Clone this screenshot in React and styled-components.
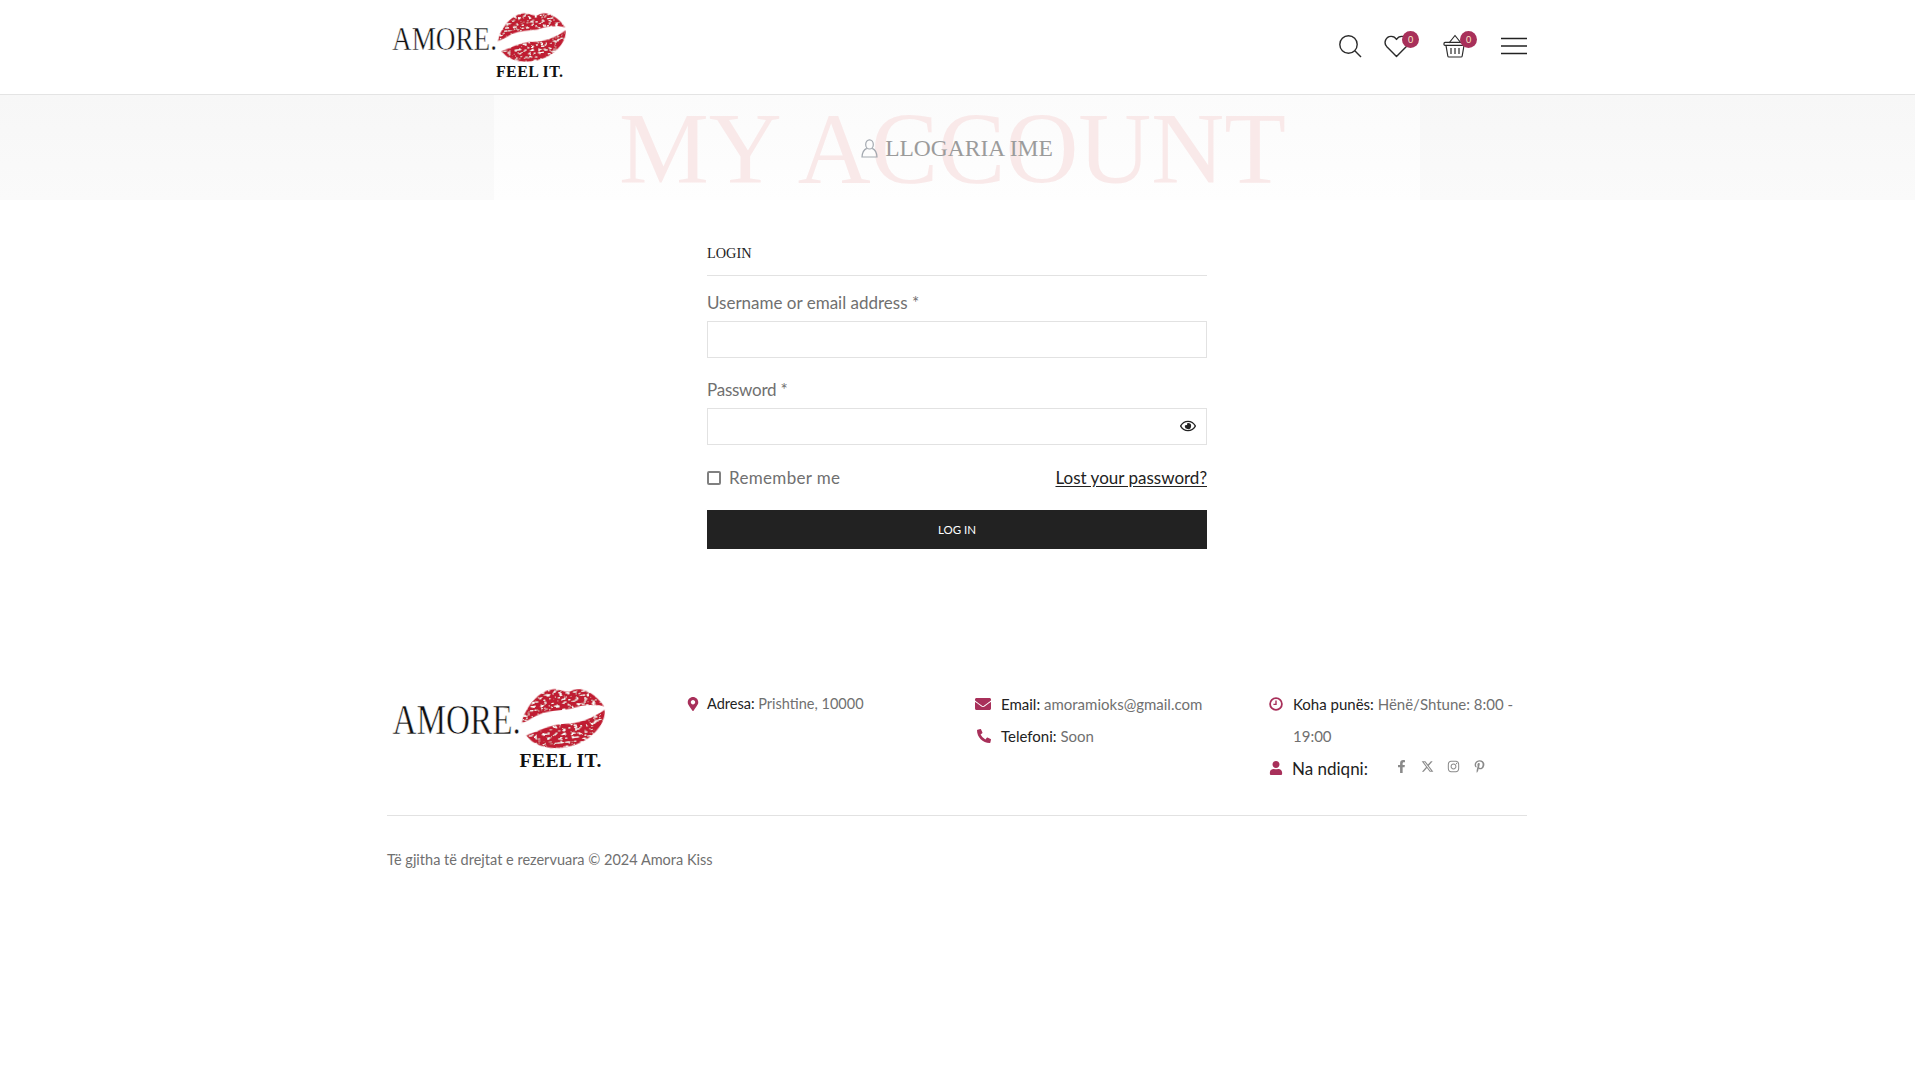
import React from "react";
import styled, { createGlobalStyle } from "styled-components";
import { FaMapMarkerAlt, FaEnvelope, FaPhoneAlt, FaUser, FaFacebookF, FaInstagram, FaPinterestP, FaRegEye } from "react-icons/fa";
import { FaXTwitter } from "react-icons/fa6";

const Global = createGlobalStyle`
  html, body { margin: 0; padding: 0; background: #fff; }
  body { font-family: Lato, "Open Sans", sans-serif; color: #666; min-height: 1085px; padding-right: 1px; }
  * { box-sizing: border-box; }
`;
const Page = styled.div`display: flex; flex-direction: column; min-height: 1085px;`;
const Header = styled.header`height: 95px; margin-right: -1px; padding-right: 1px; border-bottom: 1px solid #e4e4e4; display: flex; justify-content: center;`;
const Bar = styled.div`width: 1140px; display: flex; justify-content: space-between; align-items: flex-start; padding: 10px 0 0 3px;`;
const Icons = styled.div`display: flex; align-items: center; margin-top: 21px;`;
const IconButton = styled.div`position: relative; width: ${p => p.$w}px; height: 30px; margin-left: ${p => p.$ml}px; display: flex; align-items: center; justify-content: center; color: #2b2b2b;`;
const Badge = styled.span`position: absolute; top: 0; right: ${p => p.$r}px; width: 17px; height: 17px; border-radius: 50%; background: #a8305a; color: #fbe9c8; font-size: 9px; display: flex; align-items: center; justify-content: center;`;
const Hero = styled.section`height: 105px; margin-right: -1px; padding-right: 1px; background: linear-gradient(180deg, #f7f7f7, #fafafa); display: flex; justify-content: center;`;
const HeroInner = styled.div`width: 926px; height: 100%; display: grid; place-items: center; background: linear-gradient(180deg, #fbfbfb, #fefefe);`;
const HeroBig = styled.div`grid-area: 1 / 1; font-family: "Liberation Serif", serif; font-size: 101px; line-height: 97px; margin: 4px 9px 0 0; color: #f9e9e9; white-space: nowrap;`;
const HeroTitle = styled.h1`grid-area: 1 / 1; margin: 1px 0 0; display: flex; align-items: center; gap: 7px; font-family: "Liberation Serif", serif; font-weight: 400; font-size: 23.5px; color: #9b9b9b; white-space: nowrap;`;
const Main = styled.main`display: flex; justify-content: center; padding-top: 42px;`;
const Form = styled.div`width: 500px; display: flex; flex-direction: column;`;
const FormTitle = styled.h2`margin: 0; height: 34px; border-bottom: 1px solid #e2e2e2; font-family: "Liberation Serif", serif; font-weight: 400; font-size: 14.3px; line-height: 22px; color: #222;`;
const Label = styled.label`display: block; font-size: 17px; line-height: 20px; color: #707070; margin-top: ${p => p.$mt}px; letter-spacing: ${p => p.$ls}px;`;
const Field = styled.div`height: 37px; margin-top: 8px; border: 1px solid #e2e2e2; display: flex; align-items: center; justify-content: flex-end; padding: 0 10px 2px 0; color: #222; font-size: 16px;`;
const Row = styled.div`display: flex; justify-content: space-between; align-items: center; height: 22px; margin-top: 21px; font-size: 17px;`;
const Remember = styled.span`display: flex; align-items: center; gap: 8px; color: #707070; letter-spacing: 0.33px;`;
const Check = styled.span`width: 14px; height: 14px; margin-top: 2px; border: 2px solid #808080; border-radius: 2px; background: #fff;`;
const Lost = styled.a`color: #222; text-decoration: underline; text-underline-offset: 2px;`;
const Button = styled.button`height: 39px; margin-top: 22px; border: 0; background: #222; color: #fff; font-family: Lato, sans-serif; font-size: 11.5px;`;
const Footer = styled.footer`width: 1140px; margin: 135px auto 0; `;
const Columns = styled.div`display: grid; grid-template-columns: 299px 289px 293px 259px; height: 133px; border-bottom: 1px solid #e2e2e2; margin-top: -1px;`;
const Col = styled.div`display: flex; flex-direction: column; padding-top: 5px;`;
const LogoCol = styled.div`padding: 2px 0 0 3px;`;
const Item = styled.div`display: flex; font-size: ${p => p.$fs || 15}px; line-height: 32px; color: #707070;`;
const ItemIcon = styled.span`flex: 0 0 ${p => p.$w}px; height: 32px; display: flex; align-items: center; color: #a8305a; font-size: ${p => p.$s || 14}px; padding-left: ${p => p.$pl || 0}px;`;
const Strong = styled.span`color: #222;`;
const Follow = styled.div`display: flex; align-items: center; height: 32px; color: #222; font-size: 17px;`;
const Social = styled.div`display: flex; align-items: center; gap: 13px; margin-left: 27px; color: #8a8a8a; font-size: 13px; margin-top: -4px;`;
const Copy = styled.div`font-size: 14.5px; line-height: 20px; color: #707070; margin-top: 34px;`;

const Lips = () => (
  <g transform="rotate(-6 141 26)">
    <path d="M107 28 C113 12 127 1 138 3 C143 4 146 7 150 6 C159 2 169 9 176 21 C167 18 158 18 150 20 C141 21 128 19 120 23 C115 25 111 27 107 28Z" fill="#c01f33" filter="url(#mottle)" />
    <path d="M110 38 C122 35 132 31 142 32 C152 33 164 31 176 24 C176 37 160 50 142 51 C127 52 115 47 110 38Z" fill="#c01f33" filter="url(#mottle)" />
  </g>
);
const Logo = ({ w }) => (
  <svg width={w} height={w * 0.4} viewBox="0 0 180 72">
    <defs>
      <filter id="mottle" x="0" y="0" width="100%" height="100%">
        <feTurbulence type="fractalNoise" baseFrequency="0.3 0.6" numOctaves="2" seed="7" result="n" />
        <feColorMatrix in="n" type="matrix" values="0 0 0 0 1  0 0 0 0 1  0 0 0 0 1  0 0 0 -9 3.7" result="w" />
        <feComposite in="w" in2="SourceGraphic" operator="in" result="spots" />
        <feMerge><feMergeNode in="SourceGraphic" /><feMergeNode in="spots" /></feMerge>
      </filter>
    </defs>
    <text x="2" y="40" fontFamily="Liberation Serif, serif" fontSize="34" fill="#111" stroke="#fff" strokeWidth="0.45" textLength="105" lengthAdjust="spacingAndGlyphs">AMORE.</text>
    <Lips />
    <text x="106" y="67" fontFamily="Liberation Serif, serif" fontWeight="700" fontSize="16" fill="#111" textLength="67" lengthAdjust="spacing">FEEL IT.</text>
  </svg>
);

const Search = () => (
  <svg width="24" height="24" viewBox="0 0 24 24" fill="none" stroke="#2b2b2b" strokeWidth="1.4"><circle cx="10.5" cy="10.5" r="8.7" /><path d="M16.8 16.8 L23 23" /></svg>
);
const Heart = () => (
  <svg width="26" height="24" viewBox="0 0 26 24" fill="none" stroke="#2b2b2b" strokeWidth="1.4" strokeLinejoin="round"><path d="M12.5 22.5 L2.6 12.4 C-0.6 8.8 1.6 2.6 7 2.4 C9.6 2.3 11.4 3.6 12.5 5.4 C13.6 3.6 15.4 2.3 18 2.4 C23.4 2.6 25.4 8.8 22.4 12.4 Z" /></svg>
);
const Basket = () => (
  <svg width="24" height="24" viewBox="0 0 24 24" fill="none" stroke="#2b2b2b" strokeWidth="1.2" strokeLinejoin="round"><path d="M6 9 L12 1.5 L18 9" /><rect x="1" y="8.4" width="22" height="3" rx="1" /><path d="M3 11.5 L4.8 22 C4.9 22.6 5.3 23 6 23 H18 C18.7 23 19.1 22.6 19.2 22 L21 11.5" /><path d="M8 14 V20 M12 14 V20 M16 14 V20" /></svg>
);
const Burger = () => (
  <svg width="26" height="18" viewBox="0 0 26 18" fill="none" stroke="#222" strokeWidth="1.6"><path d="M0 1.5 H26 M0 9 H26 M0 16.5 H26" /></svg>
);
const UserOutline = () => (
  <svg width="17" height="19" viewBox="0 0 17 19" fill="none" stroke="#a3a9b0" strokeWidth="1.2"><ellipse cx="8.5" cy="5.4" rx="3.8" ry="4.6" /><path d="M5.8 9.4 C2.6 10.8 1.2 14 1 18 H16 C15.8 14 14.4 10.8 11.2 9.4" /></svg>
);
const ClockBold = () => (
  <svg width="14" height="14" viewBox="0 0 14 14" fill="none" stroke="#a8305a" strokeWidth="1.8"><circle cx="7" cy="7" r="5.9" /><path d="M7 3.5 V7.4 H4.4" strokeWidth="1.4" /></svg>
);

export default function App() {
  return (
    <Page>
      <Global />
      <Header>
        <Bar>
          <Logo w={180} />
          <Icons>
            <IconButton $w={24} $ml={0}><Search /></IconButton>
            <IconButton $w={26} $ml={22}><Heart /><Badge $r={-9}>0</Badge></IconButton>
            <IconButton $w={24} $ml={33}><Basket /><Badge $r={-10}>0</Badge></IconButton>
            <IconButton $w={26} $ml={34}><Burger /></IconButton>
          </Icons>
        </Bar>
      </Header>
      <Hero>
        <HeroInner>
          <HeroBig>MY ACCOUNT</HeroBig>
          <HeroTitle><UserOutline />LLOGARIA IME</HeroTitle>
        </HeroInner>
      </Hero>
      <Main>
        <Form>
          <FormTitle>LOGIN</FormTitle>
          <Label $mt={17} $ls={0}>Username or email address *</Label>
          <Field />
          <Label $mt={22} $ls={-0.25}>Password *</Label>
          <Field><FaRegEye /></Field>
          <Row>
            <Remember><Check />Remember me</Remember>
            <Lost>Lost your password?</Lost>
          </Row>
          <Button>LOG IN</Button>
        </Form>
      </Main>
      <Footer>
        <Columns>
          <LogoCol><Logo w={220} /></LogoCol>
          <Col>
            <Item $fs={14.5}><ItemIcon $w={21} $s={14}><FaMapMarkerAlt /></ItemIcon><span><Strong>Adresa:</Strong> Prishtine, 10000</span></Item>
          </Col>
          <Col>
            <Item><ItemIcon $w={26} $s={16}><FaEnvelope /></ItemIcon><span><Strong>Email:</Strong> amoramioks@gmail.com</span></Item>
            <Item><ItemIcon $w={26} $s={14} $pl={2}><FaPhoneAlt /></ItemIcon><span><Strong>Telefoni:</Strong> Soon</span></Item>
          </Col>
          <Col>
            <Item><ItemIcon $w={25} $pl={1}><ClockBold /></ItemIcon><span><Strong>Koha punës:</Strong> Hënë/Shtune: 8:00 - 19:00</span></Item>
            <Follow><ItemIcon $w={24} $s={14} $pl={1}><FaUser /></ItemIcon>Na ndiqni:<Social><FaFacebookF /><FaXTwitter /><FaInstagram /><FaPinterestP /></Social></Follow>
          </Col>
        </Columns>
        <Copy>Të gjitha të drejtat e rezervuara © 2024 Amora Kiss</Copy>
      </Footer>
    </Page>
  );
}
